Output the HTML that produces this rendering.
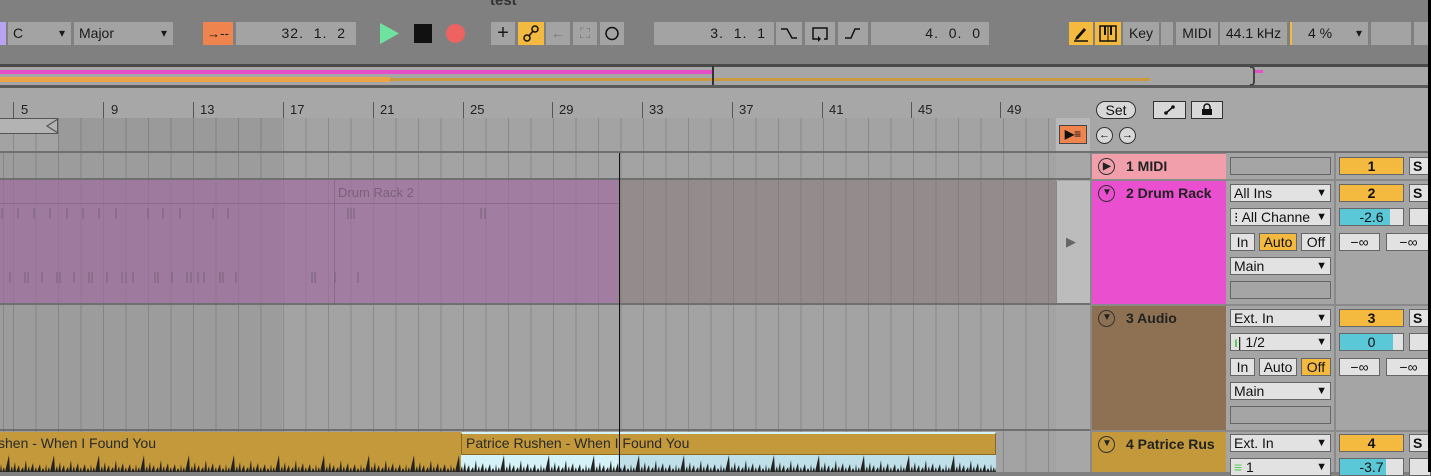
<!DOCTYPE html>
<html><head><meta charset="utf-8"><style>
*{box-sizing:border-box;margin:0;padding:0}
body{width:1431px;height:472px;overflow:hidden;background:#808080;font-family:"Liberation Sans",sans-serif;position:relative;color:#111}
.a{position:absolute}
.box{position:absolute;background:#a3a3a3;height:23px;top:22px;font-size:14px;line-height:23px;color:#1a1a1a}
.dd::after{content:"▾";position:absolute;right:6px;top:0;font-size:12px}
.grid{background-image:repeating-linear-gradient(90deg,#8a8a8a 0 1px,transparent 1px 22.5px);background-position:13px 0}
.sep{position:absolute;left:0;width:1428px;height:2px;background:#6f6f6f}
.hdr{position:absolute;left:1092px;width:134px;font-size:14px;font-weight:bold;color:#222;padding-left:34px}
.circ{position:absolute;left:6px;width:17px;height:17px;border:1.5px solid #333;border-radius:50%}
.sel{position:absolute;left:1230px;width:101px;height:18px;background:#e2e2e2;border:1px solid #666;font-size:14px;line-height:16px;padding-left:3px;color:#111}
.sel.d::after{content:"▼";position:absolute;right:3px;top:0;font-size:11px}
.btn{position:absolute;height:18px;background:#e2e2e2;border:1px solid #666;font-size:14px;line-height:16px;text-align:center;color:#111}
.yel{background:#f4b93f}
.num{position:absolute;left:1339px;width:65px;height:18px;background:#f4b93f;border:1px solid #666;font-size:14px;font-weight:bold;line-height:16px;text-align:center}
.s{position:absolute;left:1409px;width:22px;height:18px;background:#e2e2e2;border:1px solid #666;font-size:14px;font-weight:bold;line-height:16px;padding-left:3px}
.vol{position:absolute;left:1339px;width:65px;height:18px;background:#e2e2e2;border:1px solid #666;font-size:14px;line-height:16px;text-align:center}
.rul{position:absolute;top:102px;font-size:13px;color:#222}
</style></head><body>
<!-- toolbar -->
<div class="a" style="left:490px;top:-8px;font-size:15px;font-weight:bold;color:#333">test</div>
<div class="a" style="left:0;top:22px;width:6px;height:23px;background:#b7a3f0"></div>
<div class="box dd" style="left:8px;width:63px;padding-left:5px">C</div>
<div class="box dd" style="left:74px;width:99px;padding-left:5px">Major</div>
<div class="box" style="left:203px;width:30px;background:#f0844f;text-align:center;font-size:13px">→--</div>
<div class="box" style="left:236px;width:120px;text-align:right;padding-right:10px;letter-spacing:1px">32.&nbsp; 1.&nbsp; 2</div>
<svg class="a" style="left:380px;top:23px" width="20" height="21"><polygon points="0,0 19,10.5 0,21" fill="#6ee3a0"/></svg>
<div class="a" style="left:414px;top:24px;width:18px;height:19px;background:#111"></div>
<div class="a" style="left:446px;top:24px;width:19px;height:19px;background:#ee6262;border-radius:50%"></div>
<div class="box" style="left:491px;width:24px;text-align:center;font-size:20px">+</div>
<div class="box" style="left:518px;width:26px;background:#f4b93f"><svg width="26" height="23"><circle cx="9" cy="16" r="3" fill="none" stroke="#111" stroke-width="1.5"/><circle cx="17" cy="7" r="3" fill="none" stroke="#111" stroke-width="1.5"/><line x1="11" y1="14" x2="15" y2="9" stroke="#111" stroke-width="1.5"/></svg></div>
<div class="box" style="left:546px;width:24px;text-align:center;color:#777">←</div>
<div class="box" style="left:573px;width:24px;text-align:center;color:#777">⛶</div>
<div class="box" style="left:600px;width:24px"><svg width="24" height="23"><circle cx="12" cy="11.5" r="6" fill="none" stroke="#111" stroke-width="1.5"/></svg></div>
<div class="box" style="left:654px;width:120px;text-align:right;padding-right:8px;letter-spacing:1px">3.&nbsp; 1.&nbsp; 1</div>
<div class="box" style="left:776px;width:26px"><svg width="26" height="23"><path d="M5 7h6l5 9h5" fill="none" stroke="#111" stroke-width="1.5"/></svg></div>
<div class="box" style="left:805px;width:30px"><svg width="30" height="23"><path d="M19 17h3V6H8v11h5" fill="none" stroke="#111" stroke-width="1.5"/><path d="M13 14l3 3-3 3z" fill="#111"/></svg></div>
<div class="box" style="left:838px;width:30px"><svg width="30" height="23"><path d="M7 16h6l4-9h5" fill="none" stroke="#111" stroke-width="1.5"/></svg></div>
<div class="box" style="left:871px;width:118px;text-align:right;padding-right:8px;letter-spacing:1px">4.&nbsp; 0.&nbsp; 0</div>
<div class="box" style="left:1069px;width:24px;background:#f4b93f"><svg width="24" height="23"><path d="M7 15l8-9 2 2-8 9-3 1z" fill="#111"/><line x1="5" y1="19" x2="19" y2="19" stroke="#111" stroke-width="1.5"/></svg></div>
<div class="box" style="left:1095px;width:26px;background:#f4b93f"><svg width="26" height="23"><rect x="5" y="4" width="16" height="15" fill="none" stroke="#111" stroke-width="1.5"/><rect x="9" y="4" width="2" height="9" fill="#111"/><rect x="15" y="4" width="2" height="9" fill="#111"/><line x1="13" y1="4" x2="13" y2="19" stroke="#111"/></svg></div>
<div class="box" style="left:1123px;width:36px;text-align:center">Key</div>
<div class="box" style="left:1161px;width:12px"></div>
<div class="box" style="left:1176px;width:42px;text-align:center">MIDI</div>
<div class="box" style="left:1220px;width:67px;text-align:center">44.1 kHz</div>
<div class="box dd" style="left:1290px;width:78px;text-align:center;border-left:2px solid #f4b93f;padding-right:20px">4 %</div>
<div class="box" style="left:1371px;width:40px"></div>
<div class="box" style="left:1414px;width:14px"></div>
<!-- overview -->
<div class="a" style="left:0;top:64px;width:1428px;height:24px;background:#a6a6a6;border-top:3px solid #4a4a4a;border-bottom:3px solid #5a5a5a"></div>
<div class="a" style="left:0;top:70px;width:712px;height:4px;background:#e64fc7"></div>
<div class="a" style="left:0;top:77px;width:390px;height:5px;background:#eba446"></div>
<div class="a" style="left:390px;top:78px;width:760px;height:3px;background:#c99a3f"></div>
<div class="a" style="left:712px;top:66px;width:2px;height:19px;background:#333"></div>
<div class="a" style="left:1250px;top:66px;width:5px;height:20px;border:2px solid #444;border-left:0;border-radius:0 4px 4px 0"></div>
<div class="a" style="left:1255px;top:70px;width:8px;height:3px;background:#e64fc7"></div>
<!-- ruler -->
<div class="a" style="left:0;top:88px;width:1428px;height:64px;background:#a7a7a7"></div>
<div class="a grid" style="left:0;top:118px;width:1055px;height:34px;background-color:#a3a3a3"></div>
<div class="a" style="left:58px;top:118px;width:224px;height:34px;background:rgba(0,0,0,0.05)"></div>
<div class="a" style="left:0;top:118px;width:58px;height:16px;background:#b3b3b3;border:1px solid #555;border-left:0"></div>
<svg class="a" style="left:44px;top:118px" width="16" height="16"><path d="M14 1L3 8l11 7" fill="none" stroke="#555" stroke-width="1.2"/></svg>
<div class="rul" style="left:13px;border-left:1px solid #555;padding-left:7px;height:16px">5</div>
<div class="rul" style="left:103px;border-left:1px solid #555;padding-left:7px;height:16px">9</div>
<div class="rul" style="left:193px;border-left:1px solid #555;padding-left:6px;height:16px">13</div>
<div class="rul" style="left:283px;border-left:1px solid #555;padding-left:6px;height:16px">17</div>
<div class="rul" style="left:373px;border-left:1px solid #555;padding-left:6px;height:16px">21</div>
<div class="rul" style="left:463px;border-left:1px solid #555;padding-left:6px;height:16px">25</div>
<div class="rul" style="left:552px;border-left:1px solid #555;padding-left:6px;height:16px">29</div>
<div class="rul" style="left:642px;border-left:1px solid #555;padding-left:6px;height:16px">33</div>
<div class="rul" style="left:732px;border-left:1px solid #555;padding-left:6px;height:16px">37</div>
<div class="rul" style="left:822px;border-left:1px solid #555;padding-left:6px;height:16px">41</div>
<div class="rul" style="left:911px;border-left:1px solid #555;padding-left:6px;height:16px">45</div>
<div class="rul" style="left:1000px;border-left:1px solid #555;padding-left:6px;height:16px">49</div>
<div class="a" style="left:1056px;top:118px;width:34px;height:34px;background:#b8b8b8"></div>
<div class="a" style="left:1059px;top:125px;width:28px;height:19px;background:#f0844f;border:1px solid #444;font-size:12px;line-height:17px;text-align:center;font-weight:bold">▶≡</div>
<div class="a" style="left:1096px;top:101px;width:40px;height:18px;border:1px solid #333;border-radius:9px;background:#d8d8d8;font-size:14px;line-height:16px;text-align:center">Set</div>
<div class="a" style="left:1153px;top:101px;width:33px;height:18px;border:1px solid #333;background:#d8d8d8"><svg width="31" height="16"><line x1="12" y1="11" x2="19" y2="5" stroke="#111" stroke-width="1.5"/><circle cx="12" cy="11" r="1.8" fill="#111"/><circle cx="19" cy="5" r="1.8" fill="#111"/></svg></div>
<div class="a" style="left:1191px;top:101px;width:32px;height:18px;border:1px solid #333;background:#d8d8d8"><svg width="30" height="16"><rect x="10" y="7" width="10" height="6" fill="#111"/><path d="M12 7V5a3 3 0 0 1 6 0v2" fill="none" stroke="#111" stroke-width="1.5"/></svg></div>
<div class="a" style="left:1096px;top:127px;width:17px;height:17px;border:1px solid #333;border-radius:50%;background:#d8d8d8;font-size:11px;line-height:15px;text-align:center;font-weight:bold">←</div>
<div class="a" style="left:1119px;top:127px;width:17px;height:17px;border:1px solid #333;border-radius:50%;background:#d8d8d8;font-size:11px;line-height:15px;text-align:center;font-weight:bold">→</div>
<!-- arrangement -->
<div class="a grid" style="left:0;top:153px;width:1090px;height:319px;background-color:#a3a3a3"></div>
<div class="a" style="left:0;top:153px;width:282px;height:319px;background:rgba(0,0,0,0.04)"></div>
<div class="a" style="left:1056px;top:153px;width:34px;height:319px;background:#a7a7a7"></div>
<div class="a" style="left:1056px;top:181px;width:34px;height:123px;background:#bcbcbc;border-left:1px solid #888"></div>
<div class="a" style="left:1066px;top:234px;font-size:13px;color:#666">▶</div>
<!-- drum clip -->
<div class="a" style="left:0;top:180px;width:618px;height:124px;background:rgba(160,110,160,0.7)"></div>
<div class="a" style="left:0;top:203px;width:618px;height:1px;background:#8a6a88"></div>
<div class="a" style="left:334px;top:180px;width:1px;height:124px;background:#8a6a88"></div>
<div class="a" style="left:338px;top:185px;font-size:13px;color:#7c5f7a">Drum Rack 2</div>
<div class="a" style="left:618px;top:180px;width:438px;height:124px;background:rgba(130,110,115,0.45)"></div>
<svg class="a" style="left:0;top:205px" width="618" height="90"><g stroke="#7d6680" stroke-width="1.2">
<path d="M2 3v11M18 3v11M34 3v11M50 3v11M67 3v11M83 3v11M99 3v11M116 3v11M148 3v11M163 3v11M180 3v11M213 3v11M228 3v11M348 3v11M351 3v11M354 3v11M481 3v11M485 3v11"/>
<path d="M10 67v11M25 67v11M28 67v11M42 67v11M57 67v11M60 67v11M74 67v11M89 67v11M92 67v11M107 67v11M122 67v11M126 67v11M133 67v11M155 67v11M158 67v11M172 67v11M187 67v11M191 67v11M198 67v11M204 67v11M220 67v11M223 67v11M236 67v11M312 67v11M315 67v11M335 67v11M358 67v11"/></g></svg>
<!-- separators -->
<div class="sep" style="top:151px"></div>
<div class="sep" style="top:178px;width:1090px"></div>
<div class="sep" style="top:303px;width:1090px"></div>
<div class="sep" style="top:429px;width:1090px"></div>
<!-- audio clip track 4 -->
<div class="a" style="left:0;top:432px;width:996px;height:40px;background:#c3993c"></div>
<div class="a" style="left:0;top:434px;width:460px;font-size:14px;color:#2a2a2a;line-height:18px;white-space:nowrap;text-indent:-2px">shen - When I Found You</div>
<div class="a" style="left:461px;top:432px;width:535px;height:23px;border:1px solid #8a6a20;border-top:2px solid #d4f2f8;font-size:14px;color:#2a2a2a;line-height:18px;padding-left:4px">Patrice Rushen - When I Found You</div>
<div class="a" style="left:461px;top:455px;width:535px;height:17px;background:#d4f2f8"></div>
<div class="a" style="left:618px;top:455px;width:378px;height:17px;background:#bfe0e8"></div>
<svg class="a" style="left:0;top:454px" width="996" height="18">
<defs><pattern id="w" width="45" height="18" patternUnits="userSpaceOnUse"><path d="M0 18L1 10 2 18 4 13 5 18 9 1 10 18 12 12 13 18 15 8 16 18 19 11 20 18 23 13 24 18 26 6 27 18 29 12 30 18 33 9 34 18 36 13 37 18 40 10 41 18 43 14 45 18Z" fill="#222"/></pattern></defs>
<rect x="0" y="0" width="996" height="18" fill="url(#w)"/></svg>
<div class="a" style="left:619px;top:153px;width:1px;height:319px;background:#111"></div>
<!-- track headers -->
<div class="a" style="left:1090px;top:153px;width:341px;height:319px;background:#8a8a8a"></div>
<div class="hdr" style="top:154px;height:25px;background:#f1a0ab;line-height:25px"><div class="circ" style="top:4px"></div><span class="a" style="left:11px;top:0;font-size:10px">▶</span>1 MIDI</div>
<div class="hdr" style="top:181px;height:123px;background:#ea4fcf;line-height:24px"><div class="circ" style="top:4px"></div><span class="a" style="left:10px;top:0;font-size:10px">▼</span>2 Drum Rack</div>
<div class="hdr" style="top:306px;height:124px;background:#8e7152;line-height:24px"><div class="circ" style="top:4px"></div><span class="a" style="left:10px;top:0;font-size:10px">▼</span>3 Audio</div>
<div class="hdr" style="top:432px;height:40px;background:#c3993c;line-height:24px"><div class="circ" style="top:4px"></div><span class="a" style="left:10px;top:0;font-size:10px">▼</span>4 Patrice Rus</div>
<div class="a" style="left:1226px;top:153px;width:108px;height:319px;background:#a5a5a5"></div>
<div class="a" style="left:1336px;top:153px;width:95px;height:319px;background:#a5a5a5"></div>
<div class="a" style="left:1226px;top:179px;width:205px;height:2px;background:#8a8a8a"></div>
<div class="a" style="left:1226px;top:304px;width:205px;height:2px;background:#8a8a8a"></div>
<div class="a" style="left:1226px;top:430px;width:205px;height:2px;background:#8a8a8a"></div>
<div class="sel" style="top:157px;background:#a5a5a5"></div>
<div class="num" style="top:157px">1</div><div class="s" style="top:157px">S</div>
<!-- track 2 io -->
<div class="sel d" style="top:184px">All Ins</div>
<div class="sel d" style="top:208px">⁝ All Channe</div>
<div class="btn" style="left:1230px;top:233px;width:25px">In</div>
<div class="btn yel" style="left:1259px;top:233px;width:38px">Auto</div>
<div class="btn" style="left:1301px;top:233px;width:30px">Off</div>
<div class="sel d" style="top:257px">Main</div>
<div class="sel" style="top:281px;background:#a5a5a5"></div>
<div class="num" style="top:184px">2</div><div class="s" style="top:184px">S</div>
<div class="vol" style="top:208px;background:linear-gradient(90deg,#5bc8d8 0 50px,#e2e2e2 50px)">-2.6</div><div class="s" style="top:208px"></div>
<div class="btn" style="left:1339px;top:233px;width:41px">−∞</div>
<div class="btn" style="left:1386px;top:233px;width:45px">−∞</div>
<!-- track 3 io -->
<div class="sel d" style="top:309px">Ext. In</div>
<div class="sel d" style="top:333px"><span style="color:#5c5;font-weight:bold">ı</span>| 1/2</div>
<div class="btn" style="left:1230px;top:358px;width:25px">In</div>
<div class="btn" style="left:1259px;top:358px;width:38px">Auto</div>
<div class="btn yel" style="left:1301px;top:358px;width:30px">Off</div>
<div class="sel d" style="top:382px">Main</div>
<div class="sel" style="top:406px;background:#a5a5a5"></div>
<div class="num" style="top:309px">3</div><div class="s" style="top:309px">S</div>
<div class="vol" style="top:333px;background:linear-gradient(90deg,#5bc8d8 0 53px,#e2e2e2 53px)">0</div><div class="s" style="top:333px"></div>
<div class="btn" style="left:1339px;top:358px;width:41px">−∞</div>
<div class="btn" style="left:1386px;top:358px;width:45px">−∞</div>
<!-- track 4 io -->
<div class="sel d" style="top:434px">Ext. In</div>
<div class="sel d" style="top:458px"><span style="color:#5c5;font-weight:bold">≡</span> 1</div>
<div class="num" style="top:434px">4</div><div class="s" style="top:434px">S</div>
<div class="vol" style="top:458px;background:linear-gradient(90deg,#5bc8d8 0 46px,#e2e2e2 46px)">-3.7</div><div class="s" style="top:458px"></div>
<div class="a" style="left:1428px;top:0;width:3px;height:472px;background:#000"></div>
</body></html>
